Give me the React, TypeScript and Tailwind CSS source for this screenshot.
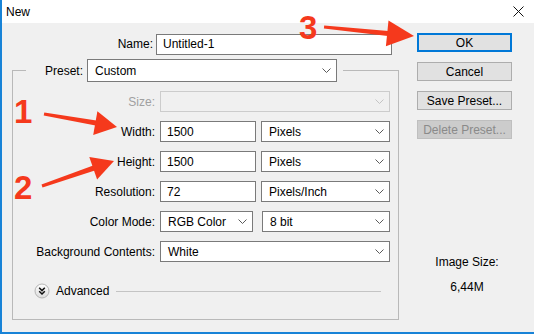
import React from 'react'

const FONT = { fontFamily: '"Liberation Sans", Arial, sans-serif' }

function Chevron({ disabled }: { disabled?: boolean }) {
  return (
    <svg width="9" height="5" viewBox="0 0 9 5" className="shrink-0">
      <path d="M0.5 0.5 L4.5 4.5 L8.5 0.5" fill="none" stroke={disabled ? '#c4c4c4' : '#5a5a5a'} strokeWidth="1" />
    </svg>
  )
}

function Select({ value, width, disabled }: { value?: string; width: string; disabled?: boolean }) {
  return (
    <div
      className={`${width} h-[21px] flex items-center justify-between pl-[7px] pr-[5px] border ${
        disabled ? 'border-[#cccccc] bg-[#f0f0f0]' : 'border-[#7a7a7a] bg-white'
      }`}
    >
      <span className="text-[12px] leading-none text-black">{value}</span>
      <Chevron disabled={disabled} />
    </div>
  )
}

function Input({ value, width }: { value: string; width: string }) {
  return (
    <div className={`${width} h-[21px] flex items-center pl-[6px] border border-[#7a7a7a] bg-white`}>
      <span className="text-[12px] leading-none text-black">{value}</span>
    </div>
  )
}

function Row({ label, disabled, children }: { label: string; disabled?: boolean; children: React.ReactNode }) {
  return (
    <div className="flex items-center h-[21px]">
      <span className={`w-[142px] text-right text-[12px] ${disabled ? 'text-[#a0a0a0]' : 'text-black'}`}>{label}</span>
      <div className="ml-[5px] flex items-center">{children}</div>
    </div>
  )
}

function Button({ label, primary, disabled }: { label: string; primary?: boolean; disabled?: boolean }) {
  return (
    <div
      className={`h-[19px] w-[95px] flex items-center justify-center text-[12px] ${
        primary
          ? 'border-2 border-[#0078d7] bg-[#e1e1e1] text-black'
          : disabled
          ? 'border border-[#bfbfbf] bg-[#cccccc] text-[#8a8a8a]'
          : 'border border-[#adadad] bg-[#e1e1e1] text-black'
      }`}
    >
      {label}
    </div>
  )
}

function AdvancedIcon() {
  return (
    <svg width="16" height="16" viewBox="0 0 16 16">
      <defs>
        <linearGradient id="adv" x1="0" y1="0" x2="0" y2="1">
          <stop offset="0" stopColor="#ffffff" />
          <stop offset="1" stopColor="#dcdcdc" />
        </linearGradient>
      </defs>
      <circle cx="8" cy="8" r="7" fill="url(#adv)" stroke="#b5b5b5" />
      <path d="M5.2 4.8 L8 7.6 L10.8 4.8 M5.2 8.2 L8 11 L10.8 8.2" fill="none" stroke="#111" strokeWidth="1.5" />
    </svg>
  )
}

function Annotations() {
  const red = '#f5391c'
  return (
    <>
      <svg className="absolute left-0 top-0 pointer-events-none" width="534" height="334">
        {/* 1 */}
        <polygon points="42.3,112.5 94.4,120.5 93.6,125.5 41.7,115.5" fill={red} />
        <polygon points="95.4,111.3 115,127 91.2,134.9" fill={red} />
        {/* 2 */}
        <polygon points="39.5,184.6 91.2,165.6 92.8,170.4 40.5,187.4" fill={red} />
        <polygon points="87.3,156.9 112,161 95.1,179.5" fill={red} />
        {/* 3 */}
        <polygon points="322.2,25.5 386.3,30.9 385.8,35.9 321.9,28.5" fill={red} />
        <polygon points="386.5,20.5 412,36 383.9,46.3" fill={red} />
      </svg>
      <span className="absolute left-[12px] top-[95px] text-[33px] leading-none font-bold text-[#f5391c]">1</span>
      <span className="absolute left-[12px] top-[171px] text-[33px] leading-none font-bold text-[#f5391c]">2</span>
      <span className="absolute left-[297px] top-[11px] text-[33px] leading-none font-bold text-[#f5391c]">3</span>
    </>
  )
}

export default function App() {
  return (
    <div style={FONT} className="relative w-[534px] h-[334px] overflow-hidden bg-[#f0f0f0] border-l-2 border-b-2 border-[#1883d7]">
      {/* title bar */}
      <div className="h-[23px] bg-white flex items-center justify-between pl-[4px] pr-[10px]">
        <span className="text-[12px] text-black">New</span>
        <svg width="11" height="11" viewBox="0 0 11 11">
          <path d="M0.5 0.5 L10.5 10.5 M10.5 0.5 L0.5 10.5" stroke="#111" strokeWidth="1" />
        </svg>
      </div>

      <div className="flex">
        {/* left: form */}
        <div className="pl-[10px] pt-[11px] w-[397px]">
          <div className="flex items-center h-[20px]">
            <span className="w-[141px] text-right text-[12px] text-black">Name:</span>
            <Input value="Untitled-1" width="w-[236px] ml-[3px] h-[20px]" />
          </div>

          <fieldset className="mt-[5px] w-[387px] border border-[#b9b9b9]">
            <legend className="ml-[13px] pr-[6px] flex items-center">
              <span className="w-[57px] text-right text-[12px] text-black">Preset:</span>
              <div className="ml-[4px]">
                <Select value="Custom" width="w-[250px] h-[23px]" />
              </div>
            </legend>

            <div className="pt-[9px] flex flex-col gap-[9px]">
              <Row label="Size:" disabled>
                <Select width="w-[230px]" disabled />
              </Row>
              <Row label="Width:">
                <Input value="1500" width="w-[96px]" />
                <div className="ml-[5px]"><Select value="Pixels" width="w-[129px]" /></div>
              </Row>
              <Row label="Height:">
                <Input value="1500" width="w-[96px]" />
                <div className="ml-[5px]"><Select value="Pixels" width="w-[129px]" /></div>
              </Row>
              <Row label="Resolution:">
                <Input value="72" width="w-[96px]" />
                <div className="ml-[5px]"><Select value="Pixels/Inch" width="w-[129px]" /></div>
              </Row>
              <Row label="Color Mode:">
                <Select value="RGB Color" width="w-[93px]" />
                <div className="ml-[9px]"><Select value="8 bit" width="w-[128px]" /></div>
              </Row>
              <Row label="Background Contents:">
                <Select value="White" width="w-[230px]" />
              </Row>
            </div>

            <div className="mt-[21px] mb-[20px] pl-[21px] pr-[17px] flex items-center h-[16px]">
              <AdvancedIcon />
              <span className="ml-[6px] text-[12px] text-black">Advanced</span>
              <div className="ml-[7px] flex-1 h-px bg-[#c4c4c4]" />
            </div>
          </fieldset>
        </div>

        {/* right: buttons */}
        <div className="ml-[18px] pt-[10px] w-[95px] flex flex-col">
          <div className="flex flex-col gap-[10px]">
            <Button label="OK" primary />
            <Button label="Cancel" />
            <Button label="Save Preset..." />
            <Button label="Delete Preset..." disabled />
          </div>
          <div className="mt-[116px] flex flex-col items-center pl-[5px] text-[12px] text-black">
            <span className="leading-[14px]">Image Size:</span>
            <span className="mt-[11px] leading-[14px]">6,44M</span>
          </div>
        </div>
      </div>

      <Annotations />
    </div>
  )
}
